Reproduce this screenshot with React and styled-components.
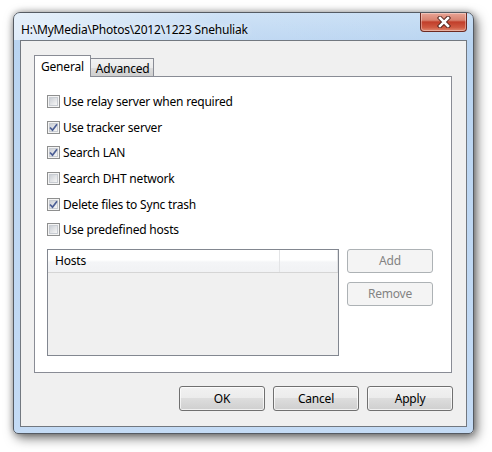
import styled, { createGlobalStyle } from 'styled-components';

const Global = createGlobalStyle`
  body {
    margin: 0;
    background: #ffffff;
    font-family: "Noto Sans", "Open Sans", sans-serif;
    font-size: 12px;
    letter-spacing: -0.2px;
  }
`;

const Page = styled.div`
  width: 492px;
  height: 452px;
  padding: 12px 0 0 13px;
  box-sizing: border-box;
`;

const Window = styled.div`
  width: 461px;
  height: 422px;
  box-sizing: border-box;
  display: flex;
  flex-direction: column;
  border: 1px solid #555b63;
  border-radius: 7px 7px 5px 5px;
  background: linear-gradient(180deg, #c9dff5 0px, #b9d4f1 30px, #c4dbf5 100%);
  box-shadow: 3px 4px 12px rgba(0, 0, 0, 0.55), 0 0 6px rgba(0, 0, 0, 0.3);
  padding: 0 6px 6px 6px;
`;

const TitleBar = styled.div`
  height: 27px;
  display: flex;
  align-items: flex-start;
  background: linear-gradient(90deg, rgba(255,255,255,0.55) 0%, rgba(255,255,255,0.1) 45%, rgba(255,255,255,0) 100%);
  margin: 0 -6px;
  padding: 0 6px;
  border-radius: 6px 6px 0 0;
`;

const Title = styled.div`
  margin-top: 8px;
  margin-left: 1px;
  color: #000;
  font-size: 12px;
  text-shadow: 0 0 6px rgba(255,255,255,0.9);
`;

const CloseButton = styled.div`
  margin-left: auto;
  width: 47px;
  height: 19px;
  box-sizing: border-box;
  border: 1px solid #6d2a22;
  border-top: none;
  border-radius: 0 0 4px 4px;
  background: linear-gradient(180deg, #e9a596 0%, #d8826f 40%, #c13e2a 50%, #cf5a42 80%, #e08c74 100%);
  display: flex;
  align-items: center;
  justify-content: center;
  box-shadow: inset 0 0 0 1px rgba(255,255,255,0.35);
`;

const Client = styled.div`
  flex: 1;
  background: #f0f0f0;
  border: 1px solid #727880;
  display: flex;
  flex-direction: column;
  padding: 14px 13px 15px 13px;
`;

const Tabs = styled.div`
  display: flex;
  align-items: flex-end;
  height: 22px;
  margin-bottom: -1px;
  position: relative;
  z-index: 1;
`;

const Tab = styled.div`
  box-sizing: border-box;
  height: ${p => (p.$active ? '22px' : '19px')};
  padding: ${p => (p.$active ? '2px 6px 0 6px' : '1px 4px 0 5px')};
  border: 1px solid #898c95;
  border-bottom: ${p => (p.$active ? 'none' : '1px solid #898c95')};
  margin-left: ${p => (p.$active ? '0' : '-1px')};
  background: ${p => (p.$active ? '#ffffff' : 'linear-gradient(180deg, #f2f2f2 0%, #ebebeb 50%, #dddddd 51%, #cfcfcf 100%)')};
  color: #000;
  font-size: 12px;
  line-height: 17px;
`;

const Panel = styled.div`
  height: 297px;
  margin-right: 1px;
  box-sizing: border-box;
  background: #ffffff;
  border: 1px solid #898c95;
  padding: 12px 0 0 12px;
  display: flex;
  flex-direction: column;
`;

const Option = styled.label`
  display: flex;
  align-items: center;
  gap: 3px;
  height: 25.6px;
  color: #000;
  font-size: 12px;
`;

const Box = styled.span`
  width: 13px;
  height: 13px;
  box-sizing: border-box;
  border: 1px solid #8e8f8f;
  background: #f4f4f4;
  display: flex;
  align-items: center;
  justify-content: center;
  position: relative;
  &::before {
    content: '';
    position: absolute;
    inset: 1px;
    background: linear-gradient(135deg, #cbcfd5 0%, #f6f6f6 100%);
    border: 1px solid #c8ccd2;
    box-sizing: border-box;
  }
  svg { position: relative; }
`;

const HostsRow = styled.div`
  display: flex;
  gap: 8px;
  margin-top: 6px;
`;

const List = styled.div`
  width: 292px;
  height: 107px;
  box-sizing: border-box;
  border: 1px solid #828790;
  background: #f0f0f0;
  display: flex;
  flex-direction: column;
`;

const ListHeader = styled.div`
  height: 23px;
  box-sizing: border-box;
  display: flex;
  background: linear-gradient(180deg, #ffffff 0%, #ffffff 45%, #f4f5f7 55%, #f1f2f4 100%);
  border-bottom: 1px solid #d5d5d5;
`;

const HeaderCell = styled.div`
  width: ${p => p.$w};
  box-sizing: border-box;
  padding-left: 7px;
  line-height: 22px;
  color: #000;
  border-right: 1px solid #e3e4e6;
`;

const SideButtons = styled.div`
  display: flex;
  flex-direction: column;
  gap: 9px;
`;

const Button = styled.div`
  width: ${p => p.$w || '86px'};
  height: ${p => p.$h || '24px'};
  box-sizing: border-box;
  border: 1px solid ${p => (p.$disabled ? '#adb2b5' : '#707070')};
  border-radius: 3px;
  background: ${p => (p.$disabled
    ? '#f4f4f4'
    : 'linear-gradient(180deg, #f2f2f2 0%, #ebebeb 49%, #dddddd 50%, #cfcfcf 100%)')};
  box-shadow: inset 0 0 0 1px ${p => (p.$disabled ? '#f4f4f4' : 'rgba(255,255,255,0.7)')};
  color: ${p => (p.$disabled ? '#838383' : '#000')};
  display: flex;
  align-items: center;
  justify-content: center;
  font-size: 12px;
`;

const Footer = styled.div`
  display: flex;
  justify-content: flex-end;
  gap: 8px;
  margin-top: auto;
`;

const options = [
  ['Use relay server when required', false],
  ['Use tracker server', true],
  ['Search LAN', true],
  ['Search DHT network', false],
  ['Delete files to Sync trash', true],
  ['Use predefined hosts', false],
];

function Check({ on }) {
  return (
    <Box>
      {on && (
        <svg width="9" height="9" viewBox="0 0 9 9">
          <path d="M1 4.5 L3.5 7.2 L8 1.2" fill="none" stroke="#4b5e95" strokeWidth="1.7" />
        </svg>
      )}
    </Box>
  );
}

export default function App() {
  return (
    <Page>
      <Global />
      <Window>
        <TitleBar>
          <Title>H:\MyMedia\Photos\2012\1223 Snehuliak</Title>
          <CloseButton>
            <svg width="14" height="12" viewBox="0 0 14 12">
              <path d="M3 2 L11 10 M11 2 L3 10" stroke="#4a1d16" strokeWidth="4.4" strokeLinecap="square" />
              <path d="M3 2 L11 10 M11 2 L3 10" stroke="#ffffff" strokeWidth="2.6" strokeLinecap="square" />
            </svg>
          </CloseButton>
        </TitleBar>
        <Client>
          <Tabs>
            <Tab $active>General</Tab>
            <Tab>Advanced</Tab>
          </Tabs>
          <Panel>
            {options.map(([label, on]) => (
              <Option key={label}>
                <Check on={on} />
                {label}
              </Option>
            ))}
            <HostsRow>
              <List>
                <ListHeader>
                  <HeaderCell $w="233px">Hosts</HeaderCell>
                  <HeaderCell $w="58px" />
                </ListHeader>
              </List>
              <SideButtons>
                <Button $disabled>Add</Button>
                <Button $disabled>Remove</Button>
              </SideButtons>
            </HostsRow>
          </Panel>
          <Footer>
            <Button $h="25px">OK</Button>
            <Button $h="25px">Cancel</Button>
            <Button $h="25px">Apply</Button>
          </Footer>
        </Client>
      </Window>
    </Page>
  );
}
